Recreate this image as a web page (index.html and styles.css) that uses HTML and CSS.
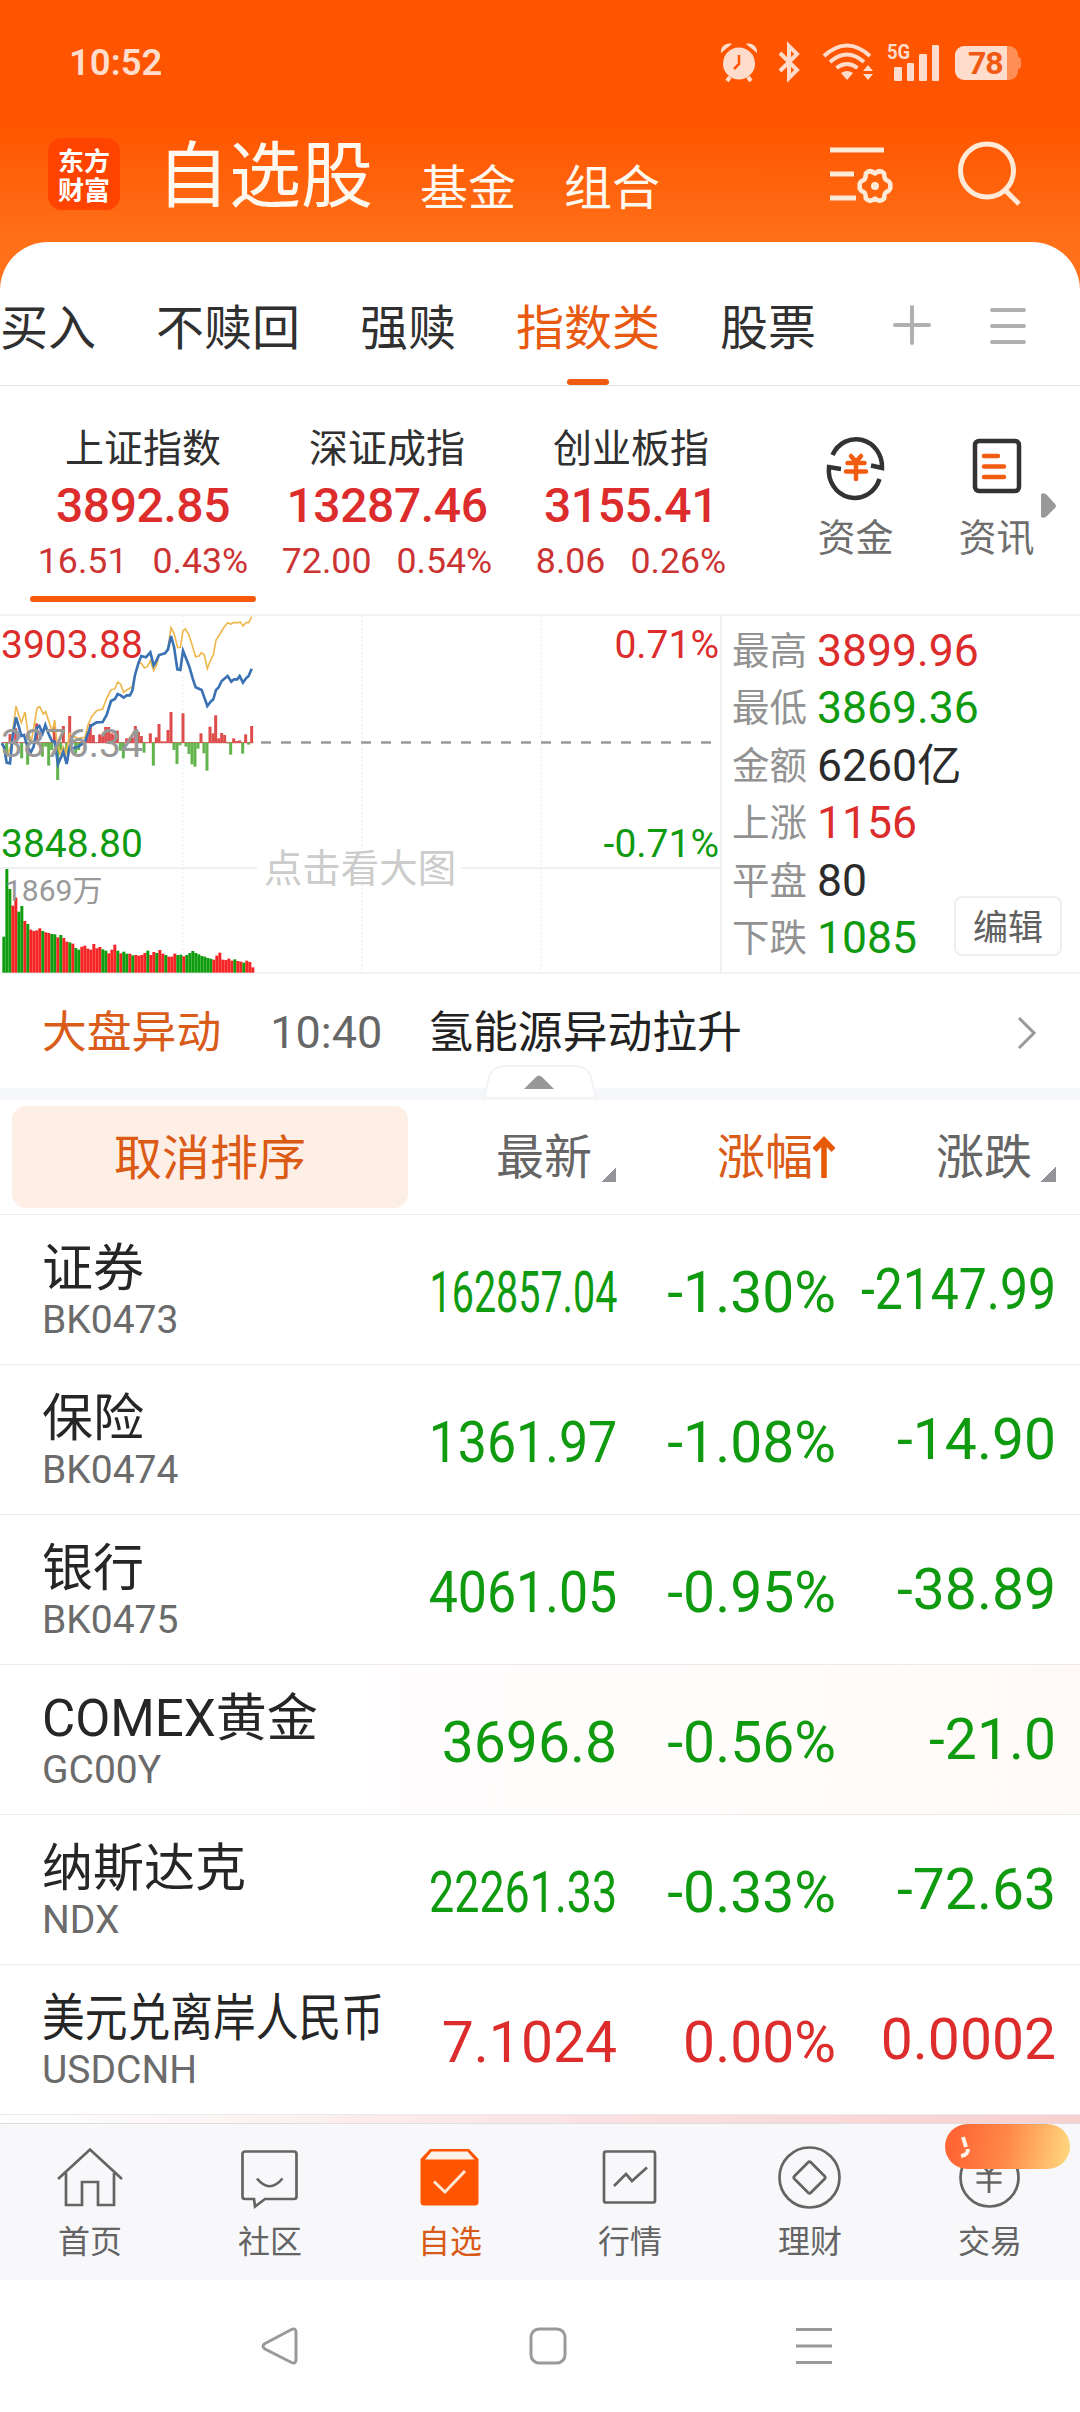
FILE: index.html
```html
<!DOCTYPE html>
<html lang="zh-CN">

<head>
    <meta charset="UTF-8">
    <meta name="viewport" content="width=device-width, initial-scale=1.0">
    <title>自选股</title>
    <link rel="stylesheet" href="styles.css">
</head>

<body>
    <header class="header">
        <div class="status-bar">
            <span class="clock">10:52</span>
            <div class="status-icons">
                <svg class="icon-alarm" width="38" height="40" viewBox="0 0 38 40">
                    <circle cx="19" cy="21.5" r="16"/>
                    <path d="M1 11C0 5 6 0 12 2ZM37 11C38 5 32 0 26 2Z"/>
                    <path class="line" d="M10 35l-3 4M28 35l3 4"/>
                    <path class="cut" d="M19 13v9l-5 5"/>
                </svg>
                <svg class="icon-bt" width="22" height="38" viewBox="0 0 22 38">
                    <path class="line" d="M2 10l17 17-8 8V3l8 8L2 28"/>
                </svg>
                <svg class="icon-wifi" width="52" height="38" viewBox="0 0 52 38">
                    <path class="line" d="M2 13Q25 -8 48 13M8 19Q25 4 42 19M14.500 25Q25 17 35.500 25"/>
                    <path d="M19 30q6-4 12 0l-6 7z"/>
                    <path d="M41 28l5-6 5 6zM41 31h10l-5 6z"/>
                </svg>
                <div class="signal">
                    <span class="signal-type">5G</span>
                    <i></i><i></i><i></i><i></i>
                </div>
                <div class="battery"><span>78</span></div>
            </div>
        </div>
        <div class="title-bar">
            <div class="logo"><span>东方</span><span>财富</span></div>
            <h1 class="title">自选股</h1>
            <span class="nav-link">基金</span>
            <span class="nav-link">组合</span>
            <svg class="icon-manage" width="64" height="58" viewBox="0 0 64 58">
                <path d="M0 3h54M0 27h24M0 51h26"/>
                <path class="gear" d="M45 26.500Q50 22 54.200 26.500Q54 31 56 32.800Q61.500 35 60.200 39Q61.500 43 56 45.200Q54 47 54.200 51.500Q50 56 45 51.500Q40 56 35.800 51.500Q36 47 34 45.200Q28.500 43 29.800 39Q28.500 35 34 32.800Q36 31 35.800 26.500Q40 22 45 26.500Z"/>
                <circle cx="45" cy="39" r="4"/>
            </svg>
            <svg class="icon-search" width="64" height="64" viewBox="0 0 64 64">
                <circle cx="29" cy="29.500" r="26.500"/>
                <path d="M47 49l14 14"/>
            </svg>
        </div>
    </header>

    <main class="panel">
        <nav class="tabs">
            <span class="tab">买入</span>
            <span class="tab">不赎回</span>
            <span class="tab">强赎</span>
            <span class="tab active">指数类</span>
            <span class="tab">股票</span>
            <svg class="icon-plus" width="38" height="40" viewBox="0 0 38 40"><path d="M2 20h34M19 2v36"/></svg>
            <svg class="icon-list" width="36" height="36" viewBox="0 0 36 36"><path d="M2 2h32M2 18h32M2 34h32"/></svg>
        </nav>

        <section class="indices">
            <div class="index active">
                <div class="index-name">上证指数</div>
                <div class="index-price">3892.85</div>
                <div class="index-change"><span>16.51</span><span>0.43%</span></div>
            </div>
            <div class="index">
                <div class="index-name">深证成指</div>
                <div class="index-price">13287.46</div>
                <div class="index-change"><span>72.00</span><span>0.54%</span></div>
            </div>
            <div class="index">
                <div class="index-name">创业板指</div>
                <div class="index-price">3155.41</div>
                <div class="index-change"><span>8.06</span><span>0.26%</span></div>
            </div>
            <div class="actions">
                <div class="action">
                    <svg width="60" height="62" viewBox="0 0 60 62">
                        <path class="dark" d="M6.500 19A26 27.500 0 0 1 56 32L45 29.500M53.500 43A26 27.500 0 0 1 3 31L15 33"/>
                        <path class="hot" d="M25 20l5 6 5-6M21.500 27h17M20 35.500h20M30 27v16"/>
                    </svg>
                    <span>资金</span>
                </div>
                <div class="action">
                    <svg width="60" height="62" viewBox="0 0 60 62">
                        <rect class="dark" x="8" y="5" width="44" height="50" rx="4"/>
                        <path class="hot" d="M17 20h14M17 30.500h20M17 41h20"/>
                    </svg>
                    <span>资讯</span>
                </div>
            </div>
            <svg class="more-arrow" width="16" height="26" viewBox="0 0 16 26"><path d="M1 1q3-2 6 1l8 9q2 2 0 4l-8 8q-3 3-6 1z"/></svg>
        </section>

        <section class="market">
            <svg class="chart" width="722" height="360" viewBox="0 0 722 360">
                <path class="grid-dot" d="M183 2V358M362 2V358M541 2V358"/>
                <path class="grid" d="M0 254H257M461 254H721M721 0V359"/>
                <path class="zero" d="M261 128.500H716"/>
                <g transform="translate(0 -14) scale(0.33333)">
                    <g id="power"></g>
                    <polyline class="avg" points="5,430 20,470 32,440 48,318 56,345 64,368 75,336 84,400 95,420 111,325 119,320 130,342 137,335 145,360 157,395 164,360 170,420 180,462 190,440 198,462 209,400 218,408 235,415 255,412 264,375 275,350 290,332 308,327 320,295 333,270 345,266 353,246 362,253 371,277 380,270 397,260 405,225 416,188 424,190 433,204 442,200 451,182 461,212 470,195 477,165 495,160 504,145 513,83 522,100 533,143 541,142 549,92 556,87 567,105 578,140 587,170 597,168 604,158 613,165 622,206 632,180 640,165 648,120 660,102 670,85 683,68 692,72 702,68 715,68 721,66 729,78 738,68 746,68 755,50"/>
                    <polyline class="price" points="5,430 12,440 20,488 30,490 38,410 48,352 56,378 64,408 72,405 82,440 92,458 101,440 111,382 118,378 128,400 136,375 145,400 155,422 164,425 174,492 184,470 190,455 200,492 209,440 218,445 235,440 255,425 262,405 272,378 290,367 308,366 320,345 333,303 345,297 353,282 362,286 371,293 380,286 390,286 397,272 405,225 415,190 424,168 438,172 451,157 461,196 468,185 477,165 495,160 504,148 513,108 522,140 532,208 541,210 549,152 558,175 568,200 578,235 587,262 605,270 614,295 622,318 632,305 640,298 648,270 656,262 665,243 683,228 694,245 702,238 712,238 719,228 729,248 738,235 746,228 755,206"/>
                    <g id="volume"></g>
                </g>
                <text class="scale red" x="1" y="44">3903.88</text>
                <text class="scale gray" x="1" y="143">3876.34</text>
                <text class="scale green" x="1" y="243">3848.80</text>
                <text class="scale red end" x="719" y="44">0.71%</text>
                <text class="scale green end" x="719" y="243">-0.71%</text>
                <text class="vol-label" x="5" y="287">1869万</text>
                <text class="hint" x="360" y="268">点击看大图</text>
            </svg>
            <div class="stats">
                <div class="stat"><label>最高</label><b class="red">3899.96</b></div>
                <div class="stat"><label>最低</label><b class="green">3869.36</b></div>
                <div class="stat"><label>金额</label><b>6260亿</b></div>
                <div class="stat"><label>上涨</label><b class="red">1156</b></div>
                <div class="stat"><label>平盘</label><b>80</b></div>
                <div class="stat"><label>下跌</label><b class="green">1085</b></div>
                <button class="edit-btn">编辑</button>
            </div>
        </section>

        <section class="news">
            <span class="news-tag">大盘异动</span>
            <span class="news-time">10:40</span>
            <span class="news-title">氢能源异动拉升</span>
            <svg class="chevron" width="20" height="34" viewBox="0 0 20 34"><path d="M2 2l15 15L2 32"/></svg>
            <svg class="collapse" width="114" height="36" viewBox="0 0 114 36">
                <path class="tab-shape" d="M1 33L5 16Q8 1 22 1H92Q106 1 109 16L113 33Z"/>
                <path class="tri" d="M41 24l12-12q3-3 6 0l12 12z"/>
            </svg>
        </section>

        <section class="list">
            <div class="list-head">
                <button class="cancel-sort">取消排序</button>
                <span class="col">最新<i class="sort-tri"></i></span>
                <span class="col sorted">涨幅<svg width="22" height="44" viewBox="0 0 22 44"><path d="M11 42V4M1.500 14L11 4l9.500 10"/></svg></span>
                <span class="col">涨跌<i class="sort-tri"></i></span>
            </div>
            <div class="row green">
                <div class="stock"><span class="name">证券</span><span class="code">BK0473</span></div>
                <span class="num last squeeze-3">162857.04</span>
                <span class="num last">-1.30%</span>
                <span class="num squeeze-1">-2147.99</span>
            </div>
            <div class="row green">
                <div class="stock"><span class="name">保险</span><span class="code">BK0474</span></div>
                <span class="num last squeeze-0">1361.97</span>
                <span class="num last">-1.08%</span>
                <span class="num">-14.90</span>
            </div>
            <div class="row green">
                <div class="stock"><span class="name">银行</span><span class="code">BK0475</span></div>
                <span class="num last squeeze-0">4061.05</span>
                <span class="num last">-0.95%</span>
                <span class="num">-38.89</span>
            </div>
            <div class="row green flash">
                <div class="stock"><span class="name">COMEX黄金</span><span class="code">GC00Y</span></div>
                <span class="num last">3696.8</span>
                <span class="num last">-0.56%</span>
                <span class="num">-21.0</span>
            </div>
            <div class="row green">
                <div class="stock"><span class="name">纳斯达克</span><span class="code">NDX</span></div>
                <span class="num last squeeze-2">22261.33</span>
                <span class="num last">-0.33%</span>
                <span class="num">-72.63</span>
            </div>
            <div class="row red">
                <div class="stock"><span class="name long">美元兑离岸人民币</span><span class="code">USDCNH</span></div>
                <span class="num last">7.1024</span>
                <span class="num last">0.00%</span>
                <span class="num">0.0002</span>
            </div>
            <div class="next-row"></div>
        </section>
    </main>

    <nav class="tabbar">
        <div class="tabbar-item">
            <svg width="64" height="64" viewBox="0 0 64 64"><path d="M0 33L32 3.500 64 33M8 27V59H24V36H40V59H56V27"/></svg>
            <span>首页</span>
        </div>
        <div class="tabbar-item">
            <svg width="64" height="64" viewBox="0 0 64 64"><path d="M7 5.500H56a2.500 2.500 0 0 1 2.500 2.500V50.500a2.500 2.500 0 0 1-2.500 2.500H27L17 60.500 16 53H7a2.500 2.500 0 0 1-2.500-2.500V8A2.500 2.500 0 0 1 7 5.500ZM19 32.500Q31.500 48 44.500 32.500"/></svg>
            <span>社区</span>
        </div>
        <div class="tabbar-item active">
            <svg width="64" height="64" viewBox="0 0 64 64">
                <path class="box" d="M12 3H51L60.500 13V56a3.500 3.500 0 0 1-3.500 3.500H6A3.500 3.500 0 0 1 2.500 56V13Z"/>
                <path class="lid" d="M13.500 5.500H49.500L56.500 13.500H7Z"/>
                <path class="check" d="M16 35.500L27 46 47 25"/>
            </svg>
            <span>自选</span>
        </div>
        <div class="tabbar-item">
            <svg width="64" height="64" viewBox="0 0 64 64"><rect x="6" y="5.500" width="51" height="51" rx="2"/><path d="M16 40L28 28 34 35 49 21.500"/></svg>
            <span>行情</span>
        </div>
        <div class="tabbar-item">
            <svg width="64" height="64" viewBox="0 0 64 64"><circle cx="31.500" cy="31.500" r="30"/><path d="M30 16.500q1.500-1.500 3 0l13.500 13.500q1.500 1.500 0 3l-13.500 13.500q-1.500 1.500-3 0l-13.500-13.500q-1.500-1.500 0-3z"/></svg>
            <span>理财</span>
        </div>
        <div class="tabbar-item">
            <svg width="64" height="64" viewBox="0 0 64 64"><circle cx="31.500" cy="31.500" r="29"/><path d="M23 17l8 10 8-10M18.500 27.500H43.500M18.500 36.500H43.500M31 27V47"/></svg>
            <span>交易</span>
            <div class="promo">
                <svg width="12" height="24" viewBox="0 0 12 24"><path d="M4 2l3 10M9 14q0 6-7 7"/></svg>
            </div>
        </div>
    </nav>

    <footer class="system-nav">
        <svg width="36" height="38" viewBox="0 0 36 38"><path d="M29.500 2.500q4.500-2 4.500 3v27q0 5-4.500 3L3 22q-4-3 0-5.500z"/></svg>
        <svg width="38" height="38" viewBox="0 0 38 38"><rect x="3" y="2" width="34" height="34" rx="8"/></svg>
        <svg width="36" height="38" viewBox="0 0 36 38"><path d="M0 2.500h36M0 19h36M0 35.500h36"/></svg>
    </footer>

    <script>
        // top of each volume bar, g = falling, r = rising
        const volume = 'g1010 g807 g867 r917 r893 g935 g918 r963 g972 r989 r993 r991 r985 g993 r997 r999 g1002 g1003 r1012 g1005 r1014 r1025 g1027 r1031 g1044 g1049 r1040 r1037 r1046 r1049 r1032 r1045 r1041 g1048 g1052 r1060 r1049 r1034 g1052 r1060 g1055 g1061 r1061 g1066 r1065 r1067 r1065 r1059 g1052 r1065 r1056 g1059 r1050 r1061 g1065 r1070 r1070 r1061 g1065 g1064 r1069 g1065 g1059 g1053 g1059 g1063 g1068 g1070 g1074 g1076 r1079 r1067 r1058 r1079 r1080 r1076 r1082 g1078 r1083 r1085 g1088 r1082 r1086 r1102'.split(' ');
        const colors = { g: '#0f9d0f', r: '#f52525' };

        let html = '';
        volume.forEach((v, i) => {
            const top = parseInt(v.slice(1));
            html += `<rect x="${7 + i * 9}" y="${top}" width="9" height="${1118 - top}" fill="${colors[v[0]]}"/>`;
        });
        document.getElementById('volume').innerHTML = html;

        // [x, end] of the buy / sell power bars around the zero line
        const power = [[20, 460], [30, 402], [47, 385], [65, 475], [83, 494], [110, 370], [127, 470], [137, 440], [146, 497], [155, 450], [163, 380], [173, 540], [182, 450], [190, 378], [200, 460], [209, 348], [227, 460], [236, 450], [262, 400], [271, 372], [280, 405], [299, 403], [308, 405], [317, 381], [326, 381], [335, 400], [343, 405], [352, 392], [361, 452], [370, 475], [380, 415], [388, 415], [397, 412], [406, 378], [415, 395], [424, 408], [432, 458], [451, 400], [460, 497], [469, 412], [477, 372], [486, 424], [495, 424], [504, 390], [513, 336], [522, 450], [531, 492], [540, 436], [549, 340], [558, 440], [567, 462], [576, 493], [585, 500], [594, 446], [603, 400], [612, 460], [621, 512], [630, 380], [639, 400], [647, 346], [656, 415], [665, 399], [674, 405], [683, 430], [692, 464], [701, 415], [710, 423], [719, 421], [728, 461], [737, 403], [746, 434], [755, 378]];
        document.getElementById('power').innerHTML = '<path d="M5 428H760" stroke="#c66" stroke-width="4"/>' + power.map(([x, end]) =>
            `<rect x="${x - 4.5}" y="${Math.min(end, 428)}" width="9" height="${Math.abs(end - 428)}" fill="${end < 428 ? '#de4c4c' : '#62b44c'}"/>`
        ).join('');
    </script>
</body>

</html>
```
FILE: styles.css
```css
* {
    box-sizing: border-box;
}

body {
    margin: 0;
    width: 1080px;
    font-family: Roboto, "Noto Sans CJK SC", sans-serif;
    background: #fefefe;
    color: #2b2b2b;
}

svg {
    display: block;
    fill: none;
    overflow: visible;
    flex: none;
}

button {
    font-family: inherit;
    border: none;
    padding: 0;
}

.red {
    color: #dc2c2c;
    fill: #dc2c2c;
}

.green {
    color: #109a10;
    fill: #109a10;
}

.gray {
    fill: #999;
}

/* header */
.header {
    height: 290px;
    margin-bottom: -48px;
    background: linear-gradient(#ff5500 125px, #ff7018 242px);
}

.status-bar {
    display: flex;
    justify-content: space-between;
    align-items: center;
    height: 124px;
    padding: 0 59px 0 69px;
    color: #ffdccb;
}

.clock {
    font-size: 36.500px;
    font-weight: 600;
}

.status-icons {
    display: flex;
    align-items: center;
}

.status-icons svg {
    fill: #ffdccb;
}

.status-icons .line {
    fill: none;
    stroke: #ffdccb;
    stroke-width: 4;
}

.status-icons .cut {
    fill: none;
    stroke: #ff5500;
    stroke-width: 2.5;
}

.icon-bt {
    margin-left: 20px;
}

.icon-wifi {
    margin-left: 22px;
}

.signal {
    position: relative;
    display: flex;
    align-items: flex-end;
    gap: 5px;
    height: 37px;
    margin-left: 20px;
}

.signal i {
    width: 7.5px;
    height: 14px;
    border-radius: 1px;
    background: #ffdccb;
}

.signal i:nth-of-type(2) {
    height: 18px;
}

.signal i:nth-of-type(3) {
    height: 27px;
}

.signal i:nth-of-type(4) {
    height: 36px;
}

.signal-type {
    position: absolute;
    left: -7px;
    top: -1px;
    font-size: 21px;
    line-height: 18px;
    font-weight: 700;
    transform: scaleX(0.88);
    transform-origin: left;
}

.battery {
    position: relative;
    width: 63px;
    height: 34px;
    margin: 2px 3px 0 16px;
    border-radius: 9px;
    background: linear-gradient(90deg, #ffdccb 52px, #ff8d56 52px);
    color: #f05a14;
    font-size: 32px;
    line-height: 35px;
    font-weight: 700;
    letter-spacing: -1px;
    padding-left: 13px;
}

.battery::after {
    content: "";
    position: absolute;
    left: 63px;
    top: 11px;
    width: 3px;
    height: 12px;
    border-radius: 0 3px 3px 0;
    background: #ff8d56;
}

.title-bar {
    display: flex;
    align-items: flex-start;
    padding: 14px 58px 0 48px;
    color: #fff8ee;
}

.logo {
    display: flex;
    flex-direction: column;
    width: 72px;
    height: 72px;
    padding: 7px 0 0 10px;
    border-radius: 14px;
    background: #ff4400;
    color: #fff;
    font-family: "Noto Sans CJK SC", sans-serif;
    font-size: 26px;
    line-height: 29px;
    font-weight: 700;
}

.title {
    margin: 3px 0 0 37px;
    font-size: 72px;
    line-height: 72px;
    font-weight: 400;
}

.nav-link {
    margin: 27px 0 0 47px;
    font-size: 48px;
    line-height: 48px;
}

.nav-link + .nav-link {
    margin-left: 48px;
}

.icon-manage {
    margin: 9px 0 0 auto;
    stroke: #ffead8;
    stroke-width: 5;
}

.icon-manage .gear {
    stroke-width: 4.500;
    stroke-linejoin: round;
}

.icon-manage circle {
    fill: #ffead8;
    stroke: none;
}

.icon-search {
    margin: 3px 0 0 64px;
    stroke: #ffead8;
    stroke-width: 5;
}

/* panel */
.panel {
    position: relative;
    height: 1881px;
    overflow: hidden;
    background: #fff;
    border-radius: 48px 48px 0 0;
}

.tabs {
    display: flex;
    gap: 60px;
    height: 144px;
    border-bottom: 1px solid #e2e2e2;
}

.tab {
    display: flex;
    flex-direction: column;
    align-items: center;
    padding-top: 53px;
    font-size: 48px;
    line-height: 68px;
    white-space: nowrap;
    color: #303030;
}

.tab.active {
    color: #e85a12;
}

.tab.active::after {
    content: "";
    width: 42px;
    height: 6px;
    margin-top: auto;
    border-radius: 3px;
    background: #f05a10;
}

.icon-plus,
.icon-list {
    stroke: #b0b0b0;
    stroke-width: 4;
    stroke-linecap: round;
}

.icon-plus {
    margin: 63px 0 0 17px;
}

.icon-list {
    margin: 66px 0 0 -1px;
}

/* index cards */
.indices {
    position: relative;
    display: flex;
    height: 228px;
    padding: 35px 0 0 21px;
}

.index {
    width: 244px;
    text-align: center;
    color: #dc2c2c;
}

.index.active::after {
    content: "";
    display: block;
    width: 226px;
    height: 6px;
    margin: 9px auto 0;
    border-radius: 3px;
    background: #f65a0a;
}

.index-name {
    font-size: 39px;
    line-height: 56px;
    color: #303030;
}

.index-price {
    font-size: 48px;
    line-height: 58px;
    font-weight: 500;
    letter-spacing: -0.400px;
}

.index-change {
    display: flex;
    justify-content: center;
    gap: 25px;
    font-size: 35.700px;
    line-height: 52px;
    color: #cc3333;
}

.actions {
    display: flex;
    margin-left: 32px;
}

.action {
    display: flex;
    flex-direction: column;
    align-items: center;
    width: 141px;
    padding-top: 15px;
    font-size: 38px;
    line-height: 56px;
    color: #6e6e6e;
}

.action svg {
    margin-bottom: 12px;
}

.action .dark {
    stroke: #333;
    stroke-width: 4.500;
}

.action .hot {
    stroke: #f25c10;
    stroke-width: 4.500;
    stroke-linecap: round;
}

.more-arrow {
    position: absolute;
    left: 1040px;
    top: 107px;
    fill: #999;
}

/* chart */
.market {
    display: flex;
    height: 360px;
    border-top: 2px solid #f3f3f5;
    border-bottom: 2px solid #f3f3f5;
}

.chart {
    margin-top: -2px;
}

.grid {
    stroke: #f0f0f2;
    stroke-width: 2;
}

.grid-dot {
    stroke: #f2f2f4;
    stroke-width: 1.500;
    stroke-dasharray: 2 2;
}

.zero {
    stroke: #999;
    stroke-width: 2.500;
    stroke-dasharray: 10 10;
}

.avg {
    stroke: #edb94e;
    stroke-width: 5;
}

.price {
    stroke: #3b72b4;
    stroke-width: 8;
}

.scale {
    font-size: 39px;
}

.end {
    text-anchor: end;
}

.vol-label {
    font-size: 30px;
    fill: #999;
}

.hint {
    font-size: 38.500px;
    fill: #ccc;
    text-anchor: middle;
}

.stats {
    position: relative;
    width: 358px;
    padding: 7px 0 0 10px;
}

.stat {
    display: flex;
    gap: 10px;
    height: 57.400px;
    line-height: 57.400px;
}

.stat label {
    font-size: 37.500px;
    color: #929292;
}

.stat b {
    font-size: 44.500px;
    font-weight: 400;
}

.edit-btn {
    position: absolute;
    right: 18px;
    bottom: 16px;
    width: 108px;
    height: 60px;
    padding-bottom: 3px;
    border: 2px solid #eee;
    border-radius: 8px;
    background: #fff;
    font-size: 35px;
    color: #606060;
}

/* news line */
.news {
    position: relative;
    display: flex;
    align-items: center;
    height: 126px;
    padding: 3px 43px 0 42px;
    border-bottom: 12px solid #f5f7fa;
    font-size: 44.800px;
    line-height: 66px;
}

.news-tag {
    color: #d95c1a;
}

.news-time {
    margin-left: 49px;
    color: #666;
    font-size: 45px;
}

.news-title {
    margin-left: 46px;
    color: #222;
}

.chevron {
    margin-left: auto;
    stroke: #999;
    stroke-width: 3;
}

.collapse {
    position: absolute;
    left: 483px;
    bottom: -13px;
}

.collapse .tab-shape {
    fill: #fff;
    stroke: #f1f3f5;
    stroke-width: 2;
}

.collapse .tri {
    fill: #979797;
}

/* stock list */
.list-head {
    display: grid;
    grid-template-columns: 404px 200px 219px 221px;
    align-items: center;
    height: 115px;
    padding-left: 12px;
    border-bottom: 1px solid #eaeaec;
    font-size: 48px;
    line-height: 72px;
    color: #666;
}

.cancel-sort {
    width: 396px;
    height: 102px;
    padding-bottom: 6px;
    border-radius: 14px;
    background: #fdeee6;
    font-size: 48px;
    color: #db5a14;
}

.col {
    display: flex;
    justify-content: flex-end;
    padding-top: 2px;
}

.sorted {
    color: #d95c18;
}

.sorted svg {
    margin: 14px 0 0 0;
    stroke: #e85a08;
    stroke-width: 5.500;
}

.sort-tri {
    width: 15px;
    height: 15px;
    margin: 45px 0 0 9px;
    background: linear-gradient(135deg, transparent 50%, #939399 50%);
}

.row {
    display: grid;
    grid-template-columns: 374px 200px 219px 220px;
    align-items: center;
    height: 150px;
    padding-left: 42px;
    border-bottom: 1px solid #eaeaec;
}

.row.flash {
    background: linear-gradient(90deg, #fff 10%, #fffaf8);
}

.stock {
    display: flex;
    flex-direction: column;
    align-items: flex-start;
}

.name {
    font-size: 51px;
    line-height: 62px;
    margin-top: -2px;
    white-space: nowrap;
    color: #262626;
}

.name.long {
    transform: scaleX(0.838);
    transform-origin: left;
}

.code {
    font-size: 39px;
    line-height: 40px;
    color: #6b6b6b;
}

.num {
    justify-self: end;
    margin-right: -1px;
    font-size: 57px;
    line-height: 66px;
    transform-origin: right;
}

.num.last {
    margin-top: 6px;
}

.squeeze-0 {
    transform: scaleX(0.91);
}

.squeeze-1 {
    transform: scaleX(0.875);
}

.squeeze-2 {
    transform: scaleX(0.787);
}

.squeeze-3 {
    transform: scaleX(0.692);
}

.next-row {
    height: 9px;
    background: linear-gradient(90deg, #fff, #fadfdf 60%, #f8d0d0);
}

/* bottom tab bar */
.tabbar {
    display: flex;
    height: 157px;
    border-top: 1px solid #dedee2;
    background: #f8f8fb;
}

.tabbar-item {
    position: relative;
    display: flex;
    flex-direction: column;
    align-items: center;
    width: 180px;
    padding-top: 22px;
    font-size: 32px;
    line-height: 44px;
    color: #646464;
}

.tabbar-item svg {
    margin-bottom: 10px;
    stroke: #646464;
    stroke-width: 2.700;
}

.tabbar-item.active {
    color: #d95a18;
}

.tabbar-item .box {
    fill: #ff5500;
    stroke: none;
}

.tabbar-item .lid {
    fill: #fdf2ea;
    stroke: none;
}

.tabbar-item .check {
    stroke: #ffe8d4;
    stroke-width: 3;
}

.promo {
    position: absolute;
    left: 45px;
    top: 0;
    width: 125px;
    height: 45px;
    padding: 11px 0 0 14px;
    border-radius: 23px;
    background: linear-gradient(100deg, #ff6636 10%, #ff8a48 50%, #ffd27c 95%);
}

.promo svg {
    stroke: #fff3ea;
    stroke-width: 4;
}

/* android navigation */
.system-nav {
    display: flex;
    justify-content: space-between;
    height: 132px;
    padding: 47px 248px 0 262px;
}

.system-nav svg {
    stroke: #9a9a9a;
    stroke-width: 3;
}
```
